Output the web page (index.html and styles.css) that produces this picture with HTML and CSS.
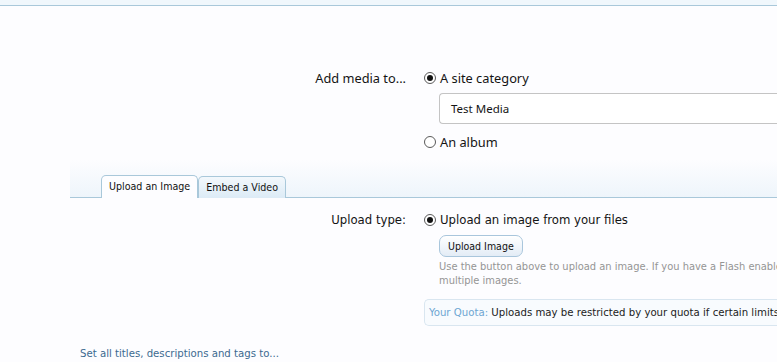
FILE: index.html
```html
<!DOCTYPE html>
<html lang="en">
<head>
  <meta charset="UTF-8" />
  <title>Add Media</title>
  <link rel="stylesheet" href="styles.css">
</head>
<body>
  <div class="topBand"></div>

  <div class="ctrlUnit first">
    <div class="label segoe">Add media to...</div>
    <div class="inputs">
      <label class="radio segoe"><input type="radio" name="target" checked> A site category</label>
      <div class="selectBox">Test Media</div>
      <label class="radio segoe album"><input type="radio" name="target"> An album</label>
    </div>
  </div>

  <div class="tabBar">
    <span class="tab active">Upload an Image</span>
    <span class="tab">Embed a Video</span>
  </div>

  <div class="ctrlUnit second">
    <div class="label tahoma">Upload type:</div>
    <div class="inputs">
      <label class="radio tahoma"><input type="radio" name="type" checked> Upload an image from your files</label>
      <button class="button">Upload Image</button>
      <p class="explain">Use the button above to upload an image. If you have a Flash enabled browser, you may select<br>multiple images.</p>
      <div class="quota"><span class="quotaLabel">Your Quota:</span> Uploads may be restricted by your quota if certain limits are reached.</div>
    </div>
  </div>

  <a class="setAll" href="#">Set all titles, descriptions and tags to...</a>
</body>
</html>
```

FILE: styles.css
```css
body {
  margin: 0;
  background: #fdfdff;
  color: #141414;
  overflow: hidden;
  width: 777px;
  height: 362px;
}
.segoe {
  font-family: "Noto Sans", sans-serif;
  font-size: 12.8px;
}
.tahoma {
  font-family: "DejaVu Sans Condensed", "DejaVu Sans", sans-serif;
  font-size: 13px;
}
.topBand {
  height: 5px;
  background: #f0f7fc;
  border-bottom: 1px solid #a9c8da;
}
.ctrlUnit {
  display: flex;
}
.ctrlUnit.first {
  margin-top: 63px;
}
.ctrlUnit.second {
  margin-top: 13px;
}
.label {
  width: 406px;
  text-align: right;
  line-height: 18px;
  flex-shrink: 0;
}
.inputs {
  margin-left: 18px;
  display: flex;
  flex-direction: column;
  align-items: flex-start;
}
.radio {
  display: flex;
  align-items: center;
  line-height: 18px;
  white-space: nowrap;
}
.radio input {
  appearance: none;
  width: 12px;
  height: 12px;
  margin: 0 4px 0 0;
  border: 1px solid #5a5a5a;
  border-radius: 50%;
  background: #fff;
  display: grid;
  place-content: center;
}
.radio input:checked::before {
  content: "";
  width: 6px;
  height: 6px;
  border-radius: 50%;
  background: #111;
}
.selectBox {
  margin: 6px 0 0 15px;
  width: 400px;
  height: 29px;
  border: 1px solid #c4c4c4;
  border-right: none;
  border-radius: 4px 0 0 4px;
  background: #fff;
  font-family: "Noto Sans", sans-serif;
  font-size: 11.5px;
  line-height: 29px;
  padding-left: 11px;
  box-sizing: content-box;
}
.album {
  margin-top: 9px;
}
.tabBar {
  margin: 9px 0 0 70px;
  padding-left: 31px;
  height: 37px;
  display: flex;
  align-items: flex-end;
  border-bottom: 1px solid #a9c8da;
  background: linear-gradient(to bottom, #fdfdff, #eef5fb);
}
.tab {
  font-family: "DejaVu Sans Condensed", "DejaVu Sans", sans-serif;
  font-size: 10.6px;
  color: #111;
  height: 21px;
  line-height: 21px;
  padding: 0 7px;
  border: 1px solid #a9c8da;
  border-bottom: none;
  border-radius: 5px 5px 0 0;
  background: linear-gradient(to bottom, #f3f8fc, #dcebf6);
  margin-bottom: -1px;
}
.tab.active {
  background: #fdfdff;
  height: 22px;
}
.button {
  margin: 6px 0 0 15px;
  height: 22px;
  padding: 0 8px;
  font-family: "DejaVu Sans Condensed", "DejaVu Sans", sans-serif;
  font-size: 10.5px;
  color: #111;
  border: 1px solid #a9c6dc;
  border-radius: 7px;
  background: linear-gradient(to bottom, #ffffff, #e3ecf6);
  box-shadow: inset 0 1px 0 #fff;
}
.explain {
  margin: 3px 0 0 15px;
  font-family: "DejaVu Sans Condensed", "DejaVu Sans", sans-serif;
  font-size: 11px;
  line-height: 14px;
  color: #959595;
  white-space: nowrap;
}
.quota {
  margin-top: 11px;
  width: 400px;
  height: 25px;
  line-height: 25px;
  padding-left: 4px;
  border: 1px solid #d9e6f0;
  border-right: none;
  border-radius: 5px 0 0 5px;
  background: #f8fbfe;
  font-family: "DejaVu Sans Condensed", "DejaVu Sans", sans-serif;
  font-size: 11.3px;
  color: #222;
  white-space: nowrap;
}
.quotaLabel {
  color: #6ea6d2;
}
.setAll {
  display: block;
  margin: 21px 0 0 80px;
  font-family: "DejaVu Sans Condensed", "DejaVu Sans", sans-serif;
  font-size: 11.3px;
  color: #3c6a90;
  text-decoration: none;
  line-height: 14px;
}
```
